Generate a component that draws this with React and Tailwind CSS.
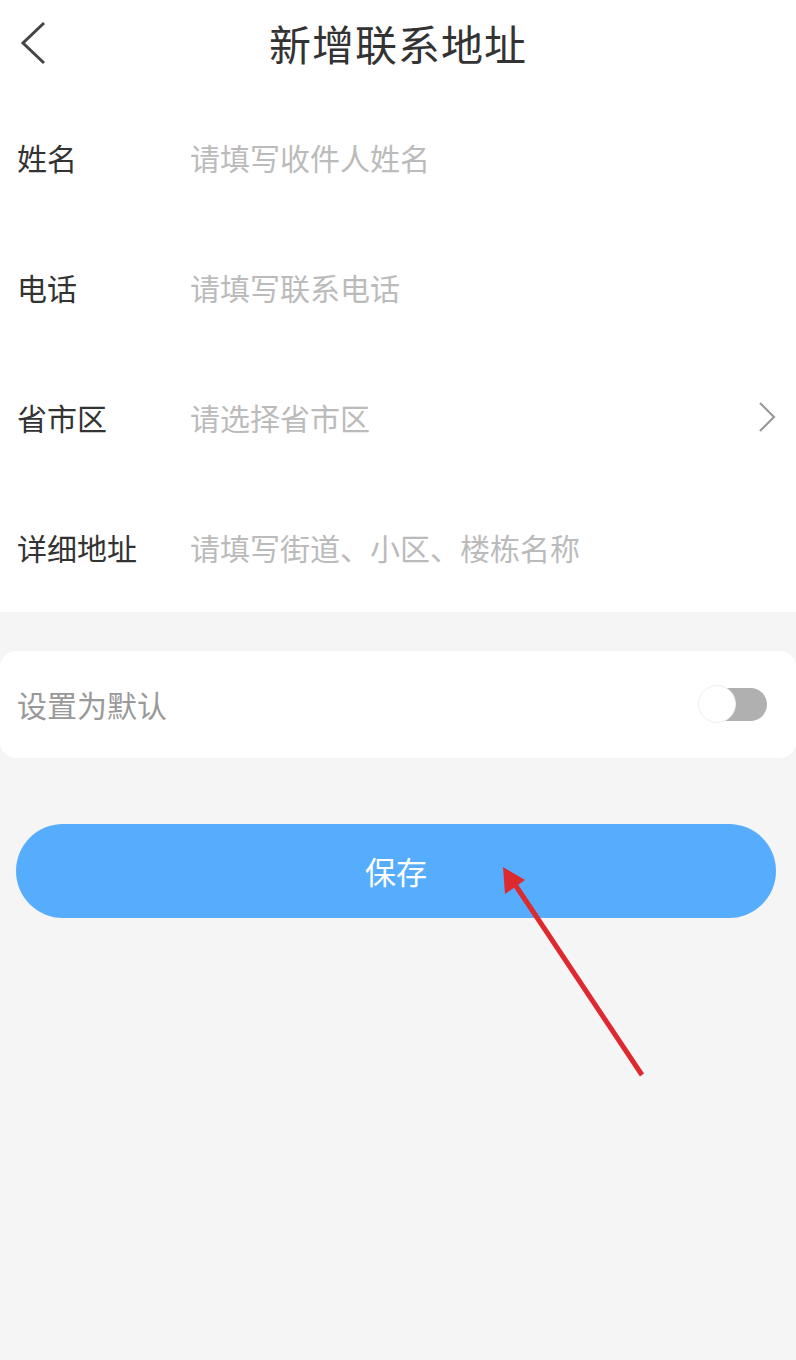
import React, { useState } from 'react'

const font = { fontFamily: '"Noto Sans CJK SC", "Noto Sans", sans-serif' }

const fields = [
  { label: '姓名', placeholder: '请填写收件人姓名' },
  { label: '电话', placeholder: '请填写联系电话' },
  { label: '省市区', placeholder: '请选择省市区', arrow: true },
  { label: '详细地址', placeholder: '请填写街道、小区、楼栋名称' },
]

const Row = ({ label, placeholder, arrow }) => (
  <div className="flex h-[130px] items-center pl-[17px] pr-[20px]">
    <span className="w-[173px] shrink-0 text-[30px] text-[#333333]">{label}</span>
    <input
      placeholder={placeholder}
      className="min-w-0 flex-1 bg-transparent text-[30px] text-[#333333] outline-none placeholder:text-[#bbbbbb]"
      style={font}
    />
    {arrow && (
      <svg width="18" height="32" viewBox="0 0 18 32" fill="none" className="shrink-0">
        <path d="M2 2 L16 16 L2 30" stroke="#999999" strokeWidth="2.2" strokeLinejoin="miter" />
      </svg>
    )}
  </div>
)

export default function App() {
  const [isDefault, setIsDefault] = useState(false)

  return (
    <div className="relative min-h-[1360px] w-full bg-[#f5f5f5]" style={font}>
      {/* Cabecera */}
      <div className="relative flex h-[92px] items-center justify-center bg-white pb-[8px]">
        <button className="absolute left-[20px] top-[21px]">
          <svg width="28" height="44" viewBox="0 0 28 44" fill="none">
            <path d="M24 2 L3 22 L24 42" stroke="#444444" strokeWidth="3" />
          </svg>
        </button>
        <h1 className="text-[42px] font-normal tracking-[1px] text-[#333333]">新增联系地址</h1>
      </div>

      {/* Campos */}
      <div className="bg-white">
        {fields.map((f) => (
          <Row key={f.label} {...f} />
        ))}
      </div>

      {/* Predeterminado */}
      <div className="mt-[39px] flex h-[107px] items-center justify-between rounded-[16px] bg-white pl-[17px] pr-[29px]">
        <span className="text-[30px] text-[#999999]">设置为默认</span>
        <button
          onClick={() => setIsDefault(!isDefault)}
          className={`relative h-[33px] w-[67px] rounded-full ${isDefault ? 'bg-[#57adfd]' : 'bg-[#b0b0b0]'}`}
        >
          <span
            className={`absolute top-[-3px] h-[38px] w-[38px] rounded-full border border-[#eeeeee] bg-white ${isDefault ? 'left-[29px]' : 'left-[-2px]'}`}
          />
        </button>
      </div>

      {/* Guardar */}
      <div className="pl-[16px] pr-[20px] pt-[66px]">
        <button className="flex h-[94px] w-full items-center justify-center rounded-full bg-[#57adfd] text-[31px] text-white">
          保存
        </button>
      </div>

      {/* Flecha de anotación */}
      <svg className="pointer-events-none absolute left-0 top-0" width="796" height="1360">
        <line x1="642" y1="1075" x2="512" y2="880" stroke="#dd2a2f" strokeWidth="5" />
        <polygon points="503,867 505,894 525,880" fill="#dd2a2f" />
      </svg>
    </div>
  )
}
